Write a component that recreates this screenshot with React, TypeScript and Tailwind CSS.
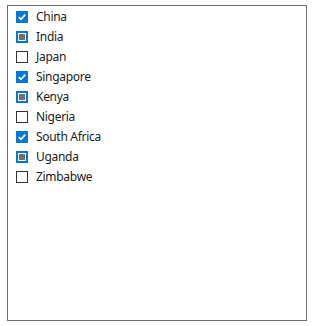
import React from 'react'

type State = 'checked' | 'mixed' | 'unchecked'

const countries: { name: string; state: State }[] = [
  { name: 'China', state: 'checked' },
  { name: 'India', state: 'mixed' },
  { name: 'Japan', state: 'unchecked' },
  { name: 'Singapore', state: 'checked' },
  { name: 'Kenya', state: 'mixed' },
  { name: 'Nigeria', state: 'unchecked' },
  { name: 'South Africa', state: 'checked' },
  { name: 'Uganda', state: 'mixed' },
  { name: 'Zimbabwe', state: 'unchecked' },
]

function Box({ state }: { state: State }) {
  if (state === 'checked') {
    return (
      <span className="flex h-[12px] w-[12px] items-center justify-center bg-[#0078d7]">
        <svg width="10" height="10" viewBox="0 0 10 10">
          <path d="M1.8 5.2 L4 7.3 L8.3 2.6" fill="none" stroke="#fff" strokeWidth="1.8" />
        </svg>
      </span>
    )
  }
  if (state === 'mixed') {
    return (
      <span className="flex h-[12px] w-[12px] items-center justify-center border-[2px] border-[#0078d7] bg-white">
        <span className="h-[6px] w-[6px] bg-[#707070]" />
      </span>
    )
  }
  return <span className="h-[12px] w-[12px] border border-[#333333] bg-white" />
}

export default function App() {
  return (
    <div className="h-[326px] w-[316px] bg-white pl-[7px] pt-[5px]" style={{ fontFamily: '"Segoe UI", "Noto Sans", sans-serif' }}>
      <div className="flex h-[316px] w-[300px] flex-col border border-[#6f6f6f] pl-[8px] pt-[1px]">
        {countries.map((c) => (
          <div key={c.name} className="flex h-[20px] items-center gap-[8px]">
            <Box state={c.state} />
            <span className="text-[12px] leading-none tracking-[-0.3px] text-[#1a1a1a]">{c.name}</span>
          </div>
        ))}
      </div>
    </div>
  )
}
